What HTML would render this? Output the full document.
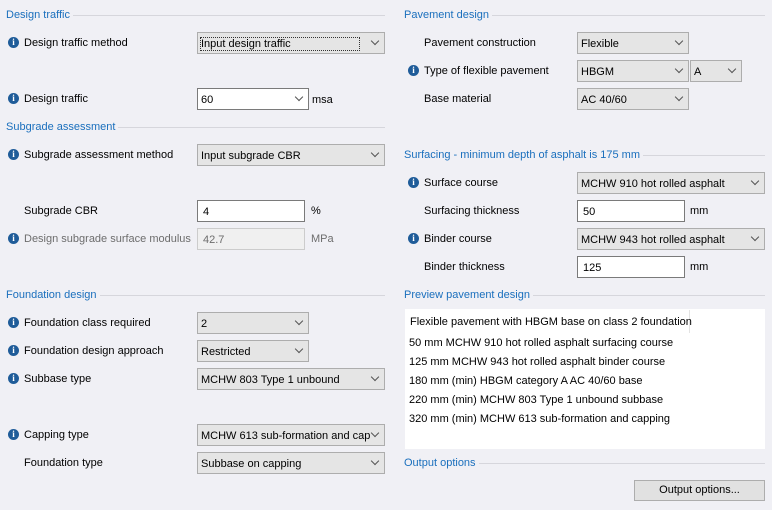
<!DOCTYPE html>
<html><head><style>
body{margin:0;width:772px;height:510px;background:#f0f0f5;font-family:"Liberation Sans",sans-serif;font-size:11px;color:#000;position:relative;overflow:hidden}
.a{position:absolute;white-space:nowrap;margin-top:1px}
.h{position:absolute;display:flex;align-items:center;color:#1a6fbd;white-space:nowrap}
.h::after{content:"";flex:1;height:1px;background:#d6d6dc;margin-left:3px}
.i{position:absolute;width:11px;height:11px;border-radius:50%;background:#1f5c99;color:#fff;font:bold 9px/11px "Liberation Serif",serif;text-align:center}
.c{position:absolute;box-sizing:border-box;height:22px;border:1px solid #adadad;background:#e5e5e5;padding:5px 0 0 3px;white-space:nowrap;overflow:hidden}
.c.w{background:#fff;border-color:#7a7a7a}
.c::after{content:"";position:absolute;right:6px;top:5px;width:5px;height:5px;border-right:1px solid #555;border-bottom:1px solid #555;transform:rotate(45deg)}
.t{position:absolute;box-sizing:border-box;height:22px;border:1px solid #7a7a7a;background:#fff;padding:5px 0 0 5px}
.g{color:#6d6d6d}
</style></head><body>
<div class="h" style="left:6px;top:8px;width:379px;height:14px">Design traffic</div>
<div class="i" style="left:8px;top:37px">i</div><div class="a" style="left:24px;top:36px">Design traffic method</div>
<div class="c" style="left:197px;top:32px;width:188px"><span style="outline:1px dotted #333;padding-right:68px">Input design traffic</span></div>
<div class="i" style="left:8px;top:93px">i</div><div class="a" style="left:24px;top:92px">Design traffic</div>
<div class="c w" style="left:197px;top:88px;width:112px">60</div><div class="a" style="left:312px;top:93px">msa</div>

<div class="h" style="left:6px;top:120px;width:379px;height:14px">Subgrade assessment</div>
<div class="i" style="left:8px;top:149px">i</div><div class="a" style="left:24px;top:148px">Subgrade assessment method</div>
<div class="c" style="left:197px;top:144px;width:188px">Input subgrade CBR</div>
<div class="a" style="left:24px;top:204px">Subgrade CBR</div>
<div class="t" style="left:197px;top:200px;width:108px">4</div><div class="a" style="left:311px;top:204px">%</div>
<div class="i" style="left:8px;top:233px">i</div><div class="a g" style="left:24px;top:232px">Design subgrade surface modulus</div>
<div class="t g" style="left:197px;top:228px;width:108px;background:#f0f0f0;border-color:#ccc">42.7</div><div class="a g" style="left:311px;top:232px">MPa</div>

<div class="h" style="left:6px;top:288px;width:379px;height:14px">Foundation design</div>
<div class="i" style="left:8px;top:317px">i</div><div class="a" style="left:24px;top:316px">Foundation class required</div>
<div class="c" style="left:197px;top:312px;width:112px">2</div>
<div class="i" style="left:8px;top:345px">i</div><div class="a" style="left:24px;top:344px">Foundation design approach</div>
<div class="c" style="left:197px;top:340px;width:112px">Restricted</div>
<div class="i" style="left:8px;top:373px">i</div><div class="a" style="left:24px;top:372px">Subbase type</div>
<div class="c" style="left:197px;top:368px;width:188px">MCHW 803 Type 1 unbound</div>
<div class="i" style="left:8px;top:429px">i</div><div class="a" style="left:24px;top:428px">Capping type</div>
<div class="c" style="left:197px;top:424px;width:188px">MCHW 613 sub-formation and cap</div>
<div class="a" style="left:24px;top:456px">Foundation type</div>
<div class="c" style="left:197px;top:452px;width:188px">Subbase on capping</div>

<div class="h" style="left:404px;top:8px;width:361px;height:14px">Pavement design</div>
<div class="a" style="left:424px;top:36px">Pavement construction</div>
<div class="c" style="left:577px;top:32px;width:112px">Flexible</div>
<div class="i" style="left:408px;top:65px">i</div><div class="a" style="left:424px;top:64px">Type of flexible pavement</div>
<div class="c" style="left:577px;top:60px;width:112px">HBGM</div>
<div class="c" style="left:690px;top:60px;width:52px">A</div>
<div class="a" style="left:424px;top:92px">Base material</div>
<div class="c" style="left:577px;top:88px;width:112px">AC 40/60</div>

<div class="h" style="left:404px;top:148px;width:361px;height:14px">Surfacing - minimum depth of asphalt is 175 mm</div>
<div class="i" style="left:408px;top:177px">i</div><div class="a" style="left:424px;top:176px">Surface course</div>
<div class="c" style="left:577px;top:172px;width:188px">MCHW 910 hot rolled asphalt</div>
<div class="a" style="left:424px;top:204px">Surfacing thickness</div>
<div class="t" style="left:577px;top:200px;width:108px">50</div><div class="a" style="left:690px;top:204px">mm</div>
<div class="i" style="left:408px;top:233px">i</div><div class="a" style="left:424px;top:232px">Binder course</div>
<div class="c" style="left:577px;top:228px;width:188px">MCHW 943 hot rolled asphalt</div>
<div class="a" style="left:424px;top:260px">Binder thickness</div>
<div class="t" style="left:577px;top:256px;width:108px">125</div><div class="a" style="left:690px;top:260px">mm</div>

<div class="h" style="left:404px;top:288px;width:361px;height:14px">Preview pavement design</div>
<div style="position:absolute;left:405px;top:309px;width:360px;height:140px;background:#fff"></div>
<div style="position:absolute;left:689px;top:310px;width:1px;height:23px;background:#e3e3e3"></div>
<div class="a" style="left:410px;top:315px">Flexible pavement with HBGM base on class 2 foundation</div>
<div class="a" style="left:409px;top:336px">50 mm MCHW 910 hot rolled asphalt surfacing course</div>
<div class="a" style="left:409px;top:355px">125 mm MCHW 943 hot rolled asphalt binder course</div>
<div class="a" style="left:409px;top:374px">180 mm (min) HBGM category A AC 40/60 base</div>
<div class="a" style="left:409px;top:393px">220 mm (min) MCHW 803 Type 1 unbound subbase</div>
<div class="a" style="left:409px;top:412px">320 mm (min) MCHW 613 sub-formation and capping</div>

<div class="h" style="left:404px;top:456px;width:361px;height:14px">Output options</div>
<div style="position:absolute;box-sizing:border-box;left:634px;top:480px;width:131px;height:21px;border:1px solid #adadad;background:#e1e1e1;text-align:center;line-height:19px">Output options...</div>
</body></html>
